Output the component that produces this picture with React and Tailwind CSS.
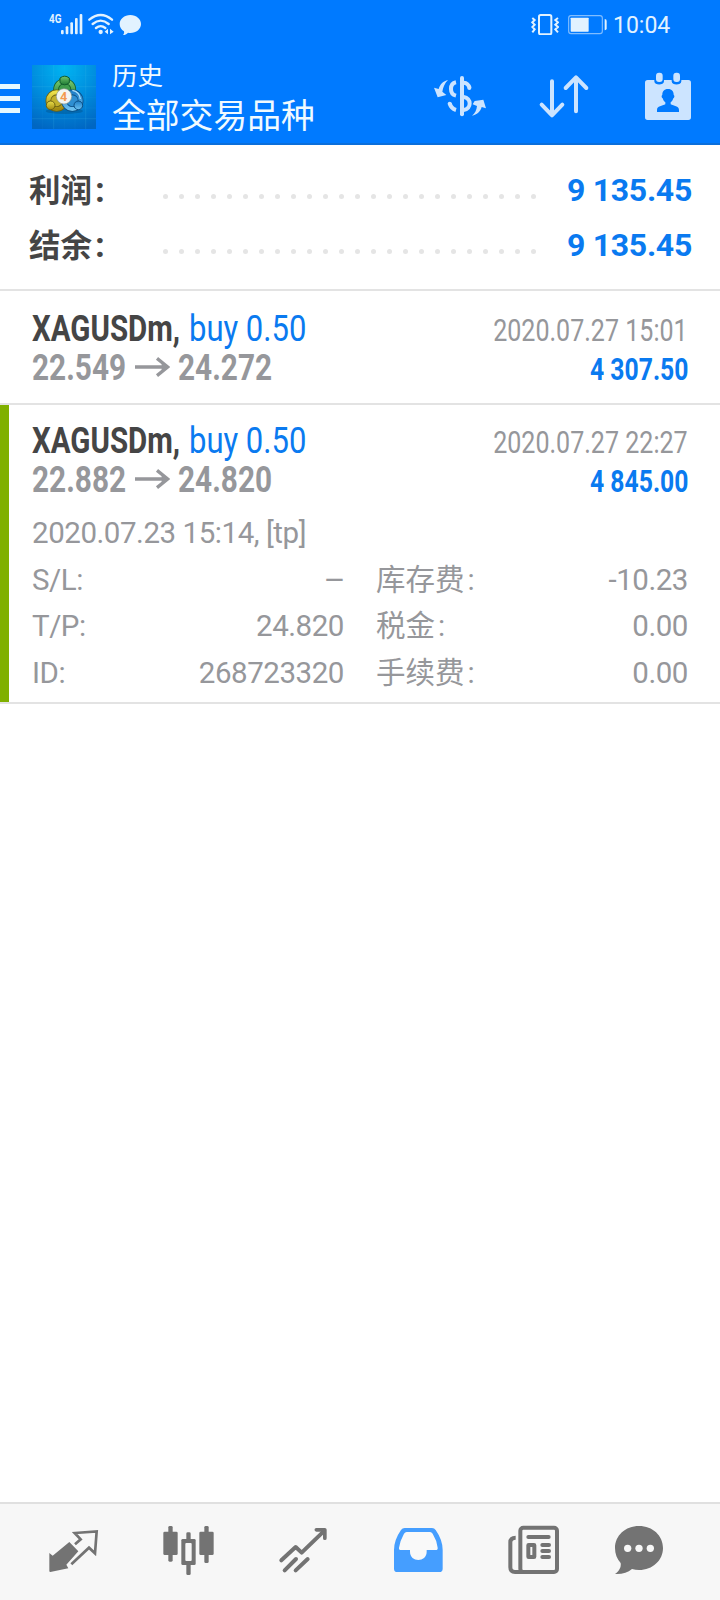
import React from 'react';

const FONT = "font-['Roboto','Noto_Sans_CJK_SC',sans-serif]";

const trades = [
    {
        symbol: 'XAGUSDm,',
        side: 'buy 0.50',
        open: '22.549',
        close: '24.272',
        time: '2020.07.27 15:01',
        profit: '4 307.50',
    },
    {
        symbol: 'XAGUSDm,',
        side: 'buy 0.50',
        open: '22.882',
        close: '24.820',
        time: '2020.07.27 22:27',
        profit: '4 845.00',
        details: {
            comment: '2020.07.23 15:14, [tp]',
            left: [['S/L', '—'], ['T/P', '24.820'], ['ID', '268723320']],
            right: [['库存费', '-10.23'], ['税金', '0.00'], ['手续费', '0.00']],
        },
    },
];

const StatusBar = () => (
    <div className="flex h-12 items-center pl-[49px] text-[#e2f2ff]">
        <span className="h-[22px] w-3 origin-left scale-x-[0.76] text-[13px] leading-[11px] font-bold">4G</span>
        <svg viewBox="183 39 66 66" className="h-[22px] w-[22px]" fill="currentColor">
            <rect x="183" y="90" width="8" height="13" rx="3" />
            <rect x="197" y="79" width="8" height="24" rx="3" />
            <rect x="211" y="67" width="8" height="36" rx="3" />
            <rect x="225" y="54" width="8" height="49" rx="3" />
            <rect x="239" y="42" width="8" height="61" rx="3" />
        </svg>
        <svg viewBox="264 39 78 66" className="ml-[5px] h-[22px] w-[26px]" fill="none" stroke="currentColor" strokeWidth="7" strokeLinecap="round">
            <path d="M268 59Q302 31 336 59M278 72Q302 52 326 72M288 84Q302 73 316 84" />
            <circle cx="302" cy="96" r="6.500" fill="currentColor" stroke="none" />
            <path d="M324 86v17l-10-8zM330 86v17l11-8z" fill="currentColor" stroke="none" />
        </svg>
        <svg viewBox="357 39 69 66" className="ml-[5px] h-[22px] w-[23px]" fill="currentColor">
            <path d="M391 45c18 0 32 12 32 27s-14 27-32 27c-3 0-5 0-7-1-4 4-9 7-15 7 3-3 4-6 3-11-8-5-13-13-13-22 0-15 14-27 32-27z" />
        </svg>
        <svg viewBox="513 39 84 66" className="ml-[389px] h-[22px] w-7" fill="none" stroke="currentColor">
            <rect x="537" y="45" width="37" height="58" rx="5" strokeWidth="6" />
            <path d="M517 54l7 6-7 7 7 7-7 7 7 7-7 9M594 54l-8 6 8 7-8 7 8 7-8 7 8 9" strokeWidth="6" />
        </svg>
        <svg viewBox="624 39 120 66" className="ml-[9px] h-[22px] w-10" fill="none">
            <rect x="626" y="47" width="101" height="54" rx="7" stroke="#80bdff" strokeWidth="3.500" />
            <rect x="632" y="53" width="54" height="42" rx="2" fill="currentColor" />
            <path d="M734 57q6 0 6 6v22q0 6-6 6z" fill="currentColor" />
        </svg>
        <span className="mt-[3px] ml-[5px] text-[23px] leading-[24px]">10:04</span>
    </div>
);

const AppLogo = () => (
    <svg viewBox="0 0 192 192" className="mt-[17px] ml-3 h-16 w-16">
        <defs>
            <radialGradient id="sky" cx="50%" cy="5%" r="100%">
                <stop offset="0" stopColor="#00b4f2" />
                <stop offset="0.5" stopColor="#008ede" />
                <stop offset="1" stopColor="#0066c2" />
            </radialGradient>
            <linearGradient id="green" x1="0" y1="0" x2="0" y2="1">
                <stop offset="0" stopColor="#74c66c" />
                <stop offset="1" stopColor="#1d7a35" />
            </linearGradient>
            <linearGradient id="yellow" x1="0" y1="0" x2="0" y2="1">
                <stop offset="0" stopColor="#ece04a" />
                <stop offset="1" stopColor="#a18a12" />
            </linearGradient>
            <linearGradient id="blue" x1="0" y1="0" x2="0" y2="1">
                <stop offset="0" stopColor="#1f7fc8" />
                <stop offset="1" stopColor="#6cc0f0" />
            </linearGradient>
        </defs>
        <rect width="192" height="192" fill="url(#sky)" />
        <path d="M32 0v192M97 0v192M129 0v192M0 32h192M0 97h192M0 129h192" stroke="#4cc4ee" strokeOpacity="0.08" strokeWidth="2" />
        <path d="M65 0v192M161 0v192M0 65h192M0 161h192" stroke="#4cc4ee" strokeOpacity="0.25" strokeWidth="2" />
        <ellipse cx="97" cy="138" rx="56" ry="9" fill="#034a80" opacity="0.4" />
        <circle cx="98" cy="74" r="26" fill="#3f9c4c" stroke="#125c2c" strokeWidth="17" />
        <circle cx="98" cy="74" r="26" fill="none" stroke="url(#green)" strokeWidth="12" />
        <circle cx="74" cy="107" r="25" fill="#c2b02c" stroke="#6d6212" strokeWidth="17" />
        <circle cx="74" cy="107" r="25" fill="none" stroke="url(#yellow)" strokeWidth="12" />
        <circle cx="121" cy="107" r="25" fill="#2f8fd2" stroke="#0b4f86" strokeWidth="17" />
        <circle cx="121" cy="107" r="25" fill="none" stroke="url(#blue)" strokeWidth="12" />
        <path d="M121 76q22 4 24 26" fill="none" stroke="#a8dcf8" strokeWidth="4" />
        <path d="M84 39q14-11 28 0v14q-14 13-28 0z" fill="url(#green)" stroke="#125c2c" strokeWidth="3" />
        <circle cx="56" cy="121" r="13" fill="url(#yellow)" stroke="#6d6212" strokeWidth="3" />
        <circle cx="139" cy="121" r="13" fill="url(#blue)" stroke="#0b4f86" strokeWidth="3" />
        <circle cx="96" cy="94" r="23" fill="#f3f5f1" stroke="#8b9a92" strokeWidth="2" />
        <text x="95" y="108" textAnchor="middle" fontSize="38" fontWeight="700" fill="#f39a50">4</text>
    </svg>
);

const AppBar = () => (
    <div className="flex h-[97px] border-b-2 border-[#0b6fdb] text-[#f0faff]">
        <div className="mt-9 flex w-5 flex-col gap-[7px]">
            <div className="h-[5px] bg-[#e6f8ff]" />
            <div className="h-[5px] bg-[#e6f8ff]" />
            <div className="h-[5px] bg-[#e6f8ff]" />
        </div>
        <AppLogo />
        <div className="ml-4 w-[322px] pt-[10px]">
            <div className="text-[25.5px] leading-[36px]">历史</div>
            <div className="text-[33.800px] leading-[46px]">全部交易品种</div>
        </div>
        <svg viewBox="219 225 162 126" className="mt-[27px] -ml-px h-[42px] w-[54px]" fill="#cce4ff">
            <path d="M264 240c-14 3-24 12-28 27l-14-4 11 29 26-7-12-10c2-13 7-25 17-35zM336 347c15-3 25-12 29-26l13 4-8-26-26 4-6 10 13 5c-1 12-6 22-15 29z" />
            <rect x="300" y="228" width="12" height="121" rx="6" />
            <path d="M288 247c-20 4-20 35 0 40M269 310c3 12 9 17 19 20M311 248c11 1 15 6 18 16M311 291c24 3 24 36 0 39" fill="none" stroke="#cce4ff" strokeWidth="12" />
            <circle cx="269" cy="311" r="6" />
            <circle cx="328" cy="264" r="6" />
        </svg>
        <svg viewBox="534 222 156 135" className="mt-[26px] ml-[51px] h-[45px] w-[52px]" fill="none" stroke="#cce4ff" strokeWidth="12" strokeLinecap="round" strokeLinejoin="round">
            <path d="M576 244v102M545 314l31 32 31-32M648 334V233M617 264l31-32 31 32" />
        </svg>
        <svg viewBox="855 216 138 147" className="mt-6 ml-[55px] h-[49px] w-[46px]">
            <path d="M863 240h20v4c0 13 29 13 29 0v-4h23v4c0 13 29 13 29 0v-4h21q8 0 8 8v104q0 8-8 8H863q-8 0-8-8V248q0-8 8-8z" fill="#cce4ff" />
            <rect x="888" y="218" width="20" height="28" rx="9" fill="#cce4ff" />
            <rect x="940" y="218" width="20" height="28" rx="9" fill="#cce4ff" />
            <path d="M924 267c12 0 17 8 17 17 4 3 2 9-1 11-2 6-4 9-8 12v6c9 5 25 5 25 17v6h-66v-6c0-12 16-12 25-17v-6c-4-3-6-6-8-12-3-2-5-8-1-11 0-9 5-17 17-17z" fill="#007aff" />
        </svg>
    </div>
);

const SummaryRow = ({ label, value }) => (
    <div className="flex h-[55px] items-center pr-7 pl-[29px] leading-[55px] font-bold">
        <span className="mt-[2px] w-[134px] text-[31.5px] text-[#454545]">
            {label}<span className="ml-[3px] text-[35px]">:</span>
        </span>
        <div className="mt-[14px] flex gap-[11px]">
            {Array.from({ length: 24 }, (_, i) => (
                <div key={i} className="h-[5px] w-[5px] rounded-full bg-[#e5e5e5]" />
            ))}
        </div>
        <span className="mt-px ml-auto text-[32px] tracking-[-0.3px] text-[#0a7af0]">{value}</span>
    </div>
);

const Arrow = () => (
    <svg viewBox="0 0 105 60" className="mx-[9px] mb-px h-5 w-[35px]" fill="none" stroke="#96979b" strokeWidth="10">
        <path d="M0 30h96M66 4l32 26-32 26" />
        <path d="M80 16l22 14-22 14z" fill="#96979b" stroke="none" />
    </svg>
);

const DetailColumn = ({ rows }) => (
    <div>
        {rows.map(([label, value]) => (
            <div key={label} className="flex justify-between">
                {/* Latin labels keep the colon tight, Chinese ones leave a small gap */}
                <span className={/^[A-Z]/.test(label) ? '' : 'tracking-normal'}>
                    {label}<span className={/^[A-Z]/.test(label) ? '' : 'ml-[3px]'}>:</span>
                </span>
                <span className={value === '—' ? 'origin-right scale-x-[0.85]' : ''}>{value}</span>
            </div>
        ))}
    </div>
);

const Trade = ({ trade }) => {
    const { symbol, side, open, close, time, profit, details } = trade;

    return (
        <div className={details
            ? 'h-[299px] border-b-2 border-[#e3e3e3]'
            : 'h-[114px] border-b-2 border-[#e3e3e3]'}
        >
            <div className={details
                ? 'h-full border-l-[9px] border-[#80b000] pt-4 pr-8 pl-[23px]'
                : 'pt-[18px] pr-8 pl-8'}
            >
                <div className="flex h-[39px] justify-between leading-[39px]">
                    <div className="flex text-[37px]">
                        <span className="w-[157px] origin-left scale-x-[0.798] font-bold whitespace-nowrap text-[#454545]">{symbol}</span>
                        <span className="origin-left scale-x-[0.838] whitespace-nowrap text-[#0a7af0]">{side}</span>
                    </div>
                    <span className="origin-right scale-x-[0.808] text-[31px] leading-[43px] whitespace-nowrap text-[#96979b]">{time}</span>
                </div>
                <div className="flex h-[39px] justify-between leading-[39px] font-bold">
                    <div className="flex items-center text-[37px] text-[#96979b]">
                        <span className="w-[94px] origin-left scale-x-[0.805]">{open}</span>
                        <Arrow />
                        <span className="-ml-px w-[94px] origin-left scale-x-[0.805]">{close}</span>
                    </div>
                    <span className="origin-right scale-x-[0.797] text-[31px] leading-[43px] text-[#0a7af0]">{profit}</span>
                </div>
                {details && (
                    <div className="mt-[11px] text-[29.5px] leading-[46.500px] font-normal tracking-[-0.45px] text-[#96979b]">
                        <div>{details.comment}</div>
                        <div className="grid grid-cols-2 gap-8">
                            <DetailColumn rows={details.left} />
                            <DetailColumn rows={details.right} />
                        </div>
                    </div>
                )}
            </div>
        </div>
    );
};

const TabBar = () => (
    <div className="flex h-[98px] gap-[61px] border-t-2 border-[#e0e0e0] bg-[#f7f7f7] pt-[19px] pl-[46px]">
        {/* Quotes */}
        <svg viewBox="138 99 162 162" className="h-[54px] w-[54px]">
            <path d="M208 156l27 28-36 40 6 11-54 11q-3 0-3-3v-54l10 8z" fill="#737373" />
            <path d="M225 163l17-15-18-19 66-5-5 66-18-17-53 50" fill="none" stroke="#737373" strokeWidth="8" />
        </svg>
        {/* Chart */}
        <svg viewBox="483 99 162 162" className="h-[54px] w-[54px]" fill="#737373">
            <rect x="505" y="108" width="13" height="107" rx="4" />
            <rect x="490" y="125" width="43" height="70" rx="4" />
            <rect x="613" y="108" width="13" height="111" rx="4" />
            <rect x="598" y="125" width="43" height="70" rx="4" />
            <rect x="559" y="127" width="13" height="128" rx="4" />
            <rect x="544" y="147" width="43" height="78" rx="4" />
            <rect x="556" y="159" width="19" height="54" rx="3" fill="#f7f7f7" />
        </svg>
        {/* Trade */}
        <svg viewBox="108 99 162 162" className="h-[54px] w-[54px]" fill="none" stroke="#737373" strokeWidth="12" strokeLinecap="round" strokeLinejoin="round">
            <path d="M124 211l43-40 18 17 66-64M134 241l34-34M167 241l36-34" />
            <path d="M229 119.500h25.500v25" strokeWidth="11" />
        </svg>
        {/* History */}
        <svg viewBox="453 99 162 162" className="h-[54px] w-[54px]">
            <path d="M494 114h82q7 0 11 6 21 30 21 60v56q0 10-10 10H472q-10 0-10-10v-56q0-30 21-60 4-6 11-6z" fill="#459eff" />
            <path d="M500 126h70q5 0 8 5 13 21 15 42 1 7-6 7h-27v5c0 33-50 33-50 0v-5h-27q-7 0-6-7 3-21 15-42 3-5 8-5z" fill="#f9f9f9" />
        </svg>
        {/* News */}
        <svg viewBox="78 99 162 162" className="h-[54px] w-[54px]" fill="none" stroke="#737373" strokeWidth="12">
            <rect x="121" y="113" width="110" height="133" rx="9" />
            <path d="M107 143q-16 0-16 14v75q0 14 14 14h25" />
            <path d="M145 141h61M187 165h20M187 183h20M187 201h20" strokeLinecap="round" />
            <rect x="145" y="165" width="18" height="36" rx="1" />
        </svg>
        {/* Messages */}
        <svg viewBox="396 99 162 162" className="-ml-[9px] h-[54px] w-[54px]">
            <path d="M477 108c41 0 72 29 72 66s-31 66-72 66c-7 0-14-1-21-3-13 11-29 16-51 15 12-8 19-20 17-33-11-12-17-27-17-45 0-37 31-66 72-66z" fill="#737373" />
            <circle cx="443" cy="175" r="11" fill="#f7f7f7" />
            <circle cx="477" cy="175" r="11" fill="#f7f7f7" />
            <circle cx="511" cy="175" r="11" fill="#f7f7f7" />
        </svg>
    </div>
);

export default function App() {
    return (
        <div className={`flex h-[1600px] w-[720px] flex-col overflow-hidden bg-white ${FONT}`}>
            <header className="bg-[#007aff]">
                <StatusBar />
                <AppBar />
            </header>
            <main className="flex-1">
                <div className="h-[146px] border-b-2 border-[#e3e3e3] pt-[17px]">
                    <SummaryRow label="利润" value="9 135.45" />
                    <SummaryRow label="结余" value="9 135.45" />
                </div>
                {trades.map((trade) => (
                    <Trade key={trade.time} trade={trade} />
                ))}
            </main>
            <TabBar />
        </div>
    );
}
